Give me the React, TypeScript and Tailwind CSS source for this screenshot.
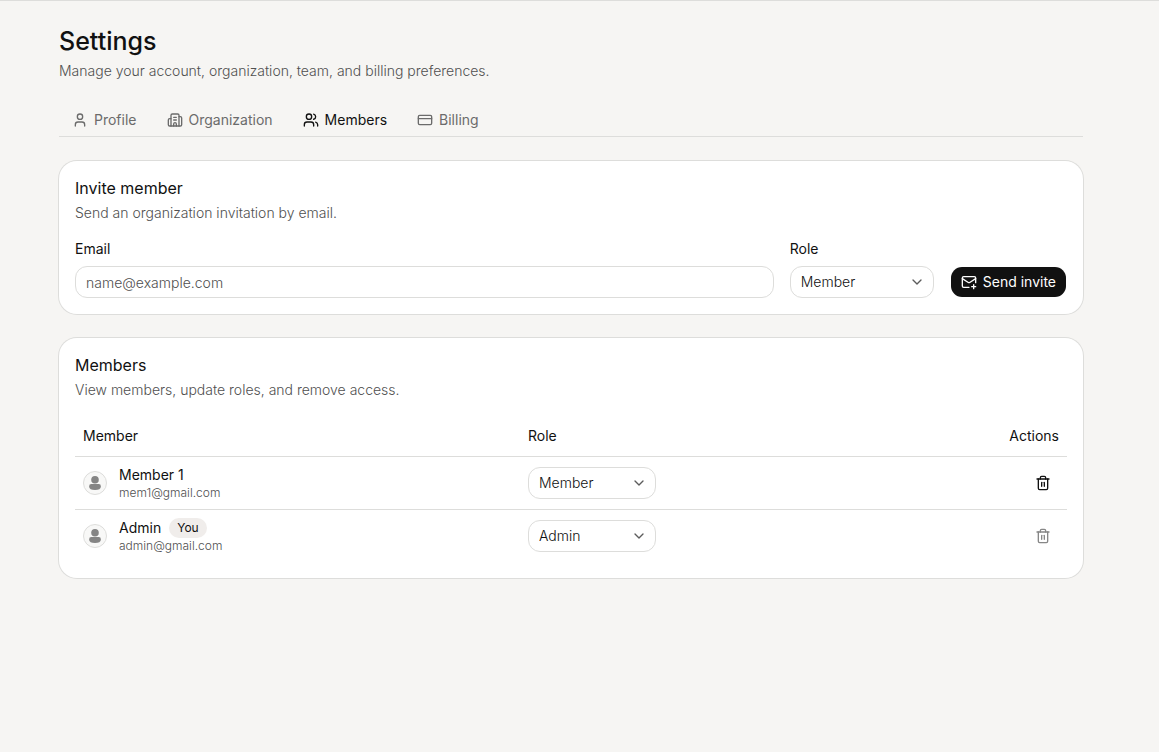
import { useState } from "react";
import type { ReactNode } from "react";
import {
  Building2,
  ChevronDown,
  CreditCard,
  MailPlus,
  Trash2,
  User,
  Users,
} from "lucide-react";
import clsx from "clsx";

const tabs = [
  { id: "profile", label: "Profile", icon: User },
  { id: "organization", label: "Organization", icon: Building2 },
  { id: "members", label: "Members", icon: Users },
  { id: "billing", label: "Billing", icon: CreditCard },
];

const members = [
  { name: "Member 1", email: "mem1@gmail.com", role: "Member", isYou: false },
  { name: "Admin", email: "admin@gmail.com", role: "Admin", isYou: true },
];

function Card({
  title,
  description,
  children,
}: {
  title: string;
  description: string;
  children: ReactNode;
}) {
  return (
    <section className="rounded-[18px] bg-white p-4 ring-1 ring-[#dddddb]">
      <h2 className="text-base leading-[22px] font-normal">{title}</h2>
      <p className="mt-1 text-sm leading-5 font-light text-[#505050]">
        {description}
      </p>
      {children}
    </section>
  );
}

function RoleSelect({
  id,
  label,
  defaultValue,
  className,
}: {
  id?: string;
  label?: string;
  defaultValue: string;
  className: string;
}) {
  return (
    <div className={clsx("relative", className)}>
      <select
        id={id}
        aria-label={label}
        defaultValue={defaultValue}
        className="h-8 w-full appearance-none rounded-xl border border-[#dddddb] bg-white px-2.5 text-sm font-light"
      >
        <option>Member</option>
        <option>Admin</option>
      </select>
      <ChevronDown className="pointer-events-none absolute top-2 right-[9px] size-4 text-[#5c5c5c]" />
    </div>
  );
}

function Avatar() {
  return (
    <svg viewBox="0 0 24 24" className="size-6 shrink-0" aria-hidden="true">
      <circle cx="12" cy="12" r="11.5" fill="#f8f8f7" stroke="#dddddb" />
      <circle cx="12" cy="8.7" r="3.8" fill="#858585" />
      <path
        d="M8.4 13h7.2a2.3 2.3 0 0 1 2.3 2.4c0 2.2-2.2 3.6-5.9 3.6s-5.9-1.4-5.9-3.6A2.3 2.3 0 0 1 8.4 13Z"
        fill="#858585"
      />
    </svg>
  );
}

export default function App() {
  const [activeTab, setActiveTab] = useState("members");

  return (
    <div className="min-h-screen border-t border-[#dddddb] bg-[#f6f5f3] font-['Inter',sans-serif] text-[#111111]">
      <main className="py-6 pr-[76px] pl-[59px]">
        <h1 className="text-[25px] leading-8 font-medium">Settings</h1>
        <p className="mt-1 text-sm leading-5 font-light text-[#505050]">
          Manage your account, organization, team, and billing preferences.
        </p>

        {/* Tabs */}
        <nav className="mt-6 flex gap-1 border-b border-[#dddddb] pb-px">
          {tabs.map(({ id, label, icon: Icon }) => (
            <button
              key={id}
              type="button"
              onClick={() => setActiveTab(id)}
              className={clsx(
                "flex h-[30px] items-center gap-1.5 px-[13px] text-sm",
                activeTab === id ? "text-[#111111]" : "text-[#6b6b6b]"
              )}
            >
              <Icon className="size-4" />
              {label}
            </button>
          ))}
        </nav>

        <div className="mt-6 flex flex-col gap-6">
          <Card
            title="Invite member"
            description="Send an organization invitation by email."
          >
            <form
              className="mt-4 flex items-end gap-4"
              onSubmit={(e) => e.preventDefault()}
            >
              <div className="flex flex-1 flex-col gap-[7px]">
                <label htmlFor="email" className="text-sm leading-5">
                  Email
                </label>
                <input
                  id="email"
                  type="email"
                  placeholder="name@example.com"
                  className="h-8 w-full rounded-xl border border-[#dddddb] bg-white px-2.5 text-sm font-light placeholder:text-[#505050]"
                />
              </div>
              <div className="flex flex-col gap-[7px]">
                <label htmlFor="role" className="text-sm leading-5">
                  Role
                </label>
                <RoleSelect id="role" defaultValue="Member" className="w-36" />
              </div>
              <button
                type="submit"
                className="flex h-8 items-center gap-1.5 rounded-xl border border-transparent bg-[#111111] bg-clip-padding px-2.5 text-sm text-white"
              >
                <MailPlus className="size-4" />
                Send invite
              </button>
            </form>
          </Card>

          <Card
            title="Members"
            description="View members, update roles, and remove access."
          >
            <table className="mt-4 w-full text-left text-sm">
              <thead>
                <tr className="h-10 border-b border-[#dddddb]">
                  <th className="w-[445px] px-2 font-normal">Member</th>
                  <th className="px-2 font-normal">Role</th>
                  <th className="px-2 text-right font-normal">Actions</th>
                </tr>
              </thead>
              <tbody>
                {members.map((member) => (
                  <tr
                    key={member.email}
                    className="h-[53px] border-b border-[#dddddb] last:border-0"
                  >
                    <td className="px-2">
                      <div className="flex items-center gap-3">
                        <Avatar />
                        <div>
                          <div className="flex h-5 items-center gap-2">
                            {member.name}
                            {member.isYou && (
                              <span className="rounded-full bg-[#f0edeb] px-2 text-xs leading-5">
                                You
                              </span>
                            )}
                          </div>
                          <div className="text-xs leading-4 font-light text-[#505050]">
                            {member.email}
                          </div>
                        </div>
                      </div>
                    </td>
                    <td className="px-2">
                      <RoleSelect
                        label={`Role for ${member.name}`}
                        defaultValue={member.role}
                        className="w-32"
                      />
                    </td>
                    <td className="px-2">
                      <button
                        type="button"
                        aria-label={`Remove ${member.name}`}
                        disabled={member.isYou}
                        className="ml-auto flex size-8 items-center justify-center disabled:opacity-50"
                      >
                        <Trash2 className="size-4" />
                      </button>
                    </td>
                  </tr>
                ))}
              </tbody>
            </table>
          </Card>
        </div>
      </main>
    </div>
  );
}
